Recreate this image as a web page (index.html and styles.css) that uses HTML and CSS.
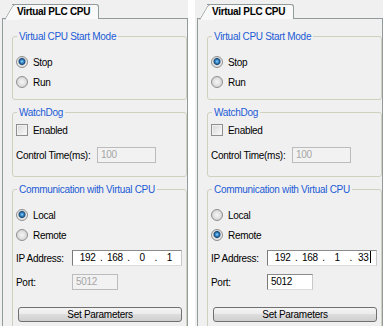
FILE: index.html
```html
<!DOCTYPE html>
<html lang="en">
<head>
    <meta charset="UTF-8">
    <title>Virtual PLC CPU</title>
    <link rel="stylesheet" href="styles.css">
</head>
<body>
<div class="dialog">
    <div class="tabs"><div class="tab">Virtual PLC CPU</div></div>
    <div class="pane">
        <fieldset class="group">
            <legend>Virtual CPU Start Mode</legend>
            <div class="row"><span class="radio checked"></span>Stop</div>
            <div class="row"><span class="radio"></span>Run</div>
        </fieldset>
        <fieldset class="group dog">
            <legend>WatchDog</legend>
            <div class="row"><span class="check"></span>Enabled</div>
            <div class="row field"><span class="caption wide">Control Time(ms):</span><span class="input off time">100</span></div>
        </fieldset>
        <fieldset class="group comm">
            <legend>Communication with Virtual CPU</legend>
            <div class="row"><span class="radio checked"></span>Local</div>
            <div class="row"><span class="radio"></span>Remote</div>
            <div class="row field ip-row">
                <span class="caption">IP Address:</span>
                <span class="input ip"><span class="oct">192</span><span class="dot">.</span><span class="oct">168</span><span class="dot">.</span><span class="oct">0</span><span class="dot">.</span><span class="oct">1</span></span>
            </div>
            <div class="row field port-row"><span class="caption">Port:</span><span class="input off port">5012</span></div>
            <div class="button">Set Parameters</div>
        </fieldset>
    </div>
</div>
<div class="dialog">
    <div class="tabs"><div class="tab">Virtual PLC CPU</div></div>
    <div class="pane">
        <fieldset class="group">
            <legend>Virtual CPU Start Mode</legend>
            <div class="row"><span class="radio checked"></span>Stop</div>
            <div class="row"><span class="radio"></span>Run</div>
        </fieldset>
        <fieldset class="group dog">
            <legend>WatchDog</legend>
            <div class="row"><span class="check"></span>Enabled</div>
            <div class="row field"><span class="caption wide">Control Time(ms):</span><span class="input off time">100</span></div>
        </fieldset>
        <fieldset class="group comm">
            <legend>Communication with Virtual CPU</legend>
            <div class="row"><span class="radio"></span>Local</div>
            <div class="row"><span class="radio checked"></span>Remote</div>
            <div class="row field ip-row">
                <span class="caption">IP Address:</span>
                <span class="input ip"><span class="oct">192</span><span class="dot">.</span><span class="oct">168</span><span class="dot">.</span><span class="oct">1</span><span class="dot">.</span><span class="oct">33<span class="caret"></span></span></span>
            </div>
            <div class="row field port-row"><span class="caption">Port:</span><span class="input port">5012</span></div>
            <div class="button">Set Parameters</div>
        </fieldset>
    </div>
</div>
</body>
</html>
```

FILE: styles.css
```css
*{
    margin: 0;
    padding: 0;
    box-sizing: border-box;
}
body{
    background: #ffffff;
    overflow: hidden;
    display: flex;
    gap: 7px;
    font: 10px "Liberation Sans", Arial, sans-serif;
    letter-spacing: -0.3px;
    white-space: nowrap;
    color: #000000;
}
.dialog{
    width: 188px;
    height: 326px;
    flex: none;
    background: #f0f0f0;
    display: flex;
    flex-direction: column;
    overflow: hidden;
}
.tabs{
    height: 18px;
    flex: none;
    display: flex;
    align-items: flex-end;
    padding-left: 12px;
}
.tab{
    position: relative;
    z-index: 1;
    height: 15px;
    margin-bottom: -1px;
    padding: 0 8px 1px 5px;
    border-top: 1px solid #919b9c;
    border-right: 1px solid #919b9c;
    border-radius: 0 3px 0 0;
    background: #f9f9f9;
    font-weight: bold;
    line-height: 13px;
}
.tab::before{
    content: '';
    position: absolute;
    z-index: -1;
    left: -8px;
    top: -1px;
    width: 14px;
    height: 15px;
    border-left: 1px solid #919b9c;
    border-top: 1px solid #919b9c;
    border-radius: 3px 0 0 0;
    background: #f9f9f9;
    transform: skewX(-30deg);
    transform-origin: bottom left;
}
.pane{
    flex: 1;
    width: 186px;
    margin-left: 2px;
    padding: 11px 0 0 9px;
    border: 1px solid #919b9c;
    border-bottom: none;
    overflow: hidden;
}
.group{
    border: 1px solid #d0d0bf;
    border-radius: 3px;
    padding: 9px 0 7px 3px;
    min-width: 0;
}
.group legend{
    padding: 0 2px;
    margin-left: 1px;
    line-height: 13px;
    color: #1c5bd6;
}
.dog{
    margin-top: 6px;
    padding: 1px 0 11px 3px;
}
.comm{
    margin-top: 6px;
    padding-bottom: 20px;
}
.row{
    height: 20px;
    display: flex;
    align-items: center;
}
.radio{
    width: 12px;
    height: 12px;
    margin-right: 5px;
    border: 1px solid #8e8f8f;
    border-radius: 50%;
    background: radial-gradient(circle at 50% 50%, #f6f6f6 0, #e4e4e4 3px, #cfcfcf 6px);
}
.radio.checked{
    background: radial-gradient(circle at 50% 45%, #9ad6f7 0, #3b8fd1 1.5px, #15497a 3px, #c9c9c9 3.8px, #ededed 4.5px, #d4d4d4 6px);
}
.check{
    width: 12px;
    height: 12px;
    margin-right: 5px;
    border: 1px solid #8e8f8f;
    background: linear-gradient(135deg, #d6d6d6, #fbfbfb);
    box-shadow: inset 0 0 0 1px #f2f2f2;
}
.field{
    margin-top: 5px;
}
.ip-row{
    margin-top: 3px;
}
.port-row{
    margin-top: 4px;
}
.caption{
    width: 56px;
    flex: none;
}
.caption.wide{
    width: 81px;
}
.input{
    height: 16px;
    padding-left: 3px;
    line-height: 14px;
    background: #ffffff;
    border: 1px solid;
    border-color: #8a8a8a #c8c8c8 #dadada #7a7a7a;
}
.input.off{
    background: #f2f2f2;
    border-color: #bcbcbc;
    color: #a6a6a6;
}
.time{
    width: 59px;
}
.port{
    width: 46px;
}
.ip{
    width: 110px;
    display: flex;
    padding-left: 3px;
}
.ip .oct{
    width: 24px;
    text-align: center;
}
.ip .dot{
    width: 4px;
    text-align: center;
}
.caret{
    display: inline-block;
    width: 1px;
    height: 12px;
    margin-left: 1px;
    vertical-align: -2px;
    background: #000000;
}
.button{
    width: 164px;
    height: 15px;
    margin: 15px 0 0 2px;
    border: 1px solid #707070;
    border-radius: 3px;
    background: linear-gradient(#f4f4f4 0, #ebebeb 50%, #dddddd 50%, #cfcfcf 100%);
    text-align: center;
    line-height: 13px;
}
```
